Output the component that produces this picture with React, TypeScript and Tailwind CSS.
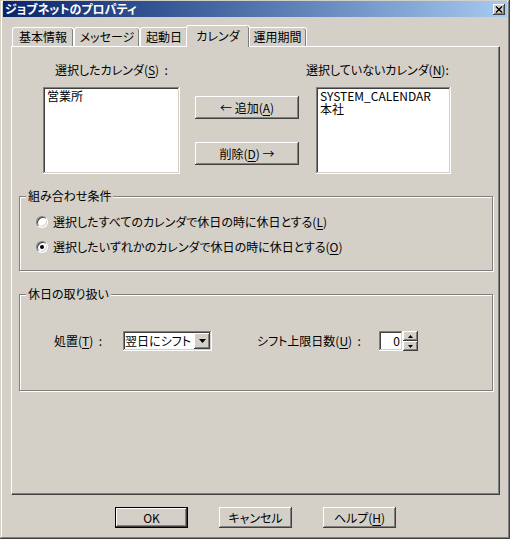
import React from "react";

const RAISED =
  "bg-[#d4d0c8] shadow-[inset_-1px_-1px_0_#404040,inset_1px_1px_0_#ffffff,inset_-2px_-2px_0_#808080,inset_2px_2px_0_#d4d0c8]";
const SUNKEN =
  "bg-white shadow-[inset_-1px_-1px_0_#ffffff,inset_1px_1px_0_#808080,inset_-2px_-2px_0_#d4d0c8,inset_2px_2px_0_#404040]";
const ETCHED =
  "border border-[#808080] shadow-[inset_1px_1px_0_#ffffff,1px_1px_0_#ffffff]";

function U({ children }: { children: React.ReactNode }) {
  return <span className="underline underline-offset-[2px]">{children}</span>;
}

function Radio({ checked, children }: { checked?: boolean; children: React.ReactNode }) {
  return (
    <div className="flex items-center h-[14px]">
      <div className="w-[12px] h-[12px] rounded-full bg-white border border-t-[#808080] border-l-[#808080] border-r-white border-b-white shadow-[inset_1px_1px_0_#404040,inset_-1px_-1px_0_#d4d0c8] flex items-center justify-center">
        {checked && <div className="w-[4px] h-[4px] rounded-full bg-black" />}
      </div>
      <span className="ml-[5px] whitespace-nowrap">{children}</span>
    </div>
  );
}

function Tab({ label, selected, w }: { label: string; selected?: boolean; w: string }) {
  return (
    <div
      className={
        selected
          ? `relative z-10 h-[22px] -mb-[1px] -mx-[2px] bg-[#d4d0c8] border-t border-l border-white border-r border-[#404040] rounded-t-[3px] shadow-[inset_-1px_0_0_#808080] flex items-start justify-center pt-[3px] whitespace-nowrap ${w}`
          : `h-[19px] bg-[#d4d0c8] border-t border-l border-white border-r border-[#404040] rounded-t-[3px] shadow-[inset_-1px_0_0_#808080] flex items-start justify-center pt-[2px] whitespace-nowrap ${w}`
      }
    >
      {label}
    </div>
  );
}

export default function App() {
  return (
    <div className="w-[510px] h-[539px] bg-[#d4d0c8] text-[12px] leading-[14px] text-black font-['Noto_Sans_CJK_JP','Liberation_Sans',sans-serif] [font-feature-settings:'palt'] shadow-[inset_-1px_-1px_0_#404040,inset_1px_1px_0_#d4d0c8,inset_-2px_-2px_0_#808080,inset_2px_2px_0_#ffffff] pt-[1px] px-[3px] flex flex-col overflow-hidden">
      {/* Title bar */}
      <div className="h-[16px] bg-linear-to-r from-[#0a246a] to-[#a6caf0] flex items-center pl-[2px] pr-[2px]">
        <span className="text-white font-bold text-[12px] leading-[14px] whitespace-nowrap">
          ジョブネットのプロパティ
        </span>
        <div className={`ml-auto w-[12px] h-[11px] ${RAISED} flex items-center justify-center`}>
          <svg width="8" height="7" viewBox="0 0 8 7">
            <path d="M1 0.5 L7 6.5 M7 0.5 L1 6.5" stroke="#000" strokeWidth="1.4" />
          </svg>
        </div>
      </div>

      {/* Tabs */}
      <div className="mt-[8px] h-[21px] flex items-end ml-[9px]">
        <Tab label="基本情報" w="w-[62px]" />
        <Tab label="メッセージ" w="w-[66px]" />
        <Tab label="起動日" w="w-[48px]" />
        <Tab label="カレンダ" w="w-[64px]" selected />
        <Tab label="運用期間" w="w-[59px]" />
      </div>

      {/* Panel */}
      <div className="ml-[8px] w-[489px] h-[449px] border-t border-l border-white border-r border-b border-r-[#404040] border-b-[#404040] shadow-[inset_-1px_-1px_0_#808080] flex flex-col">
        {/* Top section */}
        <div className="ml-[31px] mt-[16px] flex items-start">
          <div className="w-[137px] flex flex-col">
            <div className="pl-[12px] h-[14px] whitespace-nowrap">
              選択したカレンダ(<U>S</U>)&nbsp;&nbsp;:
            </div>
            <div className={`mt-[10px] h-[87px] ${SUNKEN} pl-[4px] pt-[2px] leading-[13px]`}>営業所</div>
          </div>
          <div className="ml-[15px] w-[104px] pt-[33px] flex flex-col gap-[23px]">
            <div className={`h-[23px] ${RAISED} flex items-center justify-center whitespace-nowrap`}>
              ← 追加(<U>A</U>)
            </div>
            <div className={`h-[23px] ${RAISED} flex items-center justify-center whitespace-nowrap`}>
              削除(<U>D</U>) →
            </div>
          </div>
          <div className="ml-[17px] w-[135px] flex flex-col">
            <div className="-ml-[10px] h-[14px] whitespace-nowrap">
              選択していないカレンダ(<U>N</U>):
            </div>
            <div className={`mt-[10px] h-[87px] ${SUNKEN} pl-[4px] pt-[2px] flex flex-col leading-[13px]`}>
              <div className="h-[13px]">SYSTEM_CALENDAR</div>
              <div className="h-[13px]">本社</div>
            </div>
          </div>
        </div>

        {/* Group 1 */}
        <div className={`relative ml-[7px] mt-[22px] w-[474px] h-[75px] ${ETCHED}`}>
          <span className="absolute left-[6px] -top-[8px] px-[2px] bg-[#d4d0c8] whitespace-nowrap">
            組み合わせ条件
          </span>
          <div className="pl-[16px] pt-[18px] flex flex-col gap-[11px]">
            <Radio>
              選択したすべてのカレンダで休日の時に休日とする(<U>L</U>)
            </Radio>
            <Radio checked>
              選択したいずれかのカレンダで休日の時に休日とする(<U>O</U>)
            </Radio>
          </div>
        </div>

        {/* Group 2 */}
        <div className={`relative ml-[7px] mt-[23px] w-[474px] h-[97px] ${ETCHED}`}>
          <span className="absolute left-[6px] -top-[8px] px-[2px] bg-[#d4d0c8] whitespace-nowrap">
            休日の取り扱い
          </span>
          <div className="pl-[34px] pt-[36px] flex items-center">
            <div className="w-[69px] whitespace-nowrap">
              処置(<U>T</U>)&nbsp;&nbsp;:
            </div>
            <div className={`w-[89px] h-[20px] ${SUNKEN} flex items-center pl-[2px] pr-[2px]`}>
              <span className="flex-1 whitespace-nowrap">翌日にシフト</span>
              <div className={`w-[16px] h-[16px] ${RAISED} flex items-center justify-center`}>
                <svg width="7" height="4" viewBox="0 0 7 4">
                  <path d="M0 0 H7 L3.5 4 Z" fill="#000" />
                </svg>
              </div>
            </div>
            <div className="ml-[45px] w-[122px] whitespace-nowrap">
              シフト上限日数(<U>U</U>)&nbsp;&nbsp;:
            </div>
            <div className={`w-[24px] h-[20px] ${SUNKEN} flex items-center justify-end pr-[3px]`}>0</div>
            <div className="w-[15px] h-[20px] flex flex-col">
              <div className={`h-[10px] ${RAISED} flex items-center justify-center`}>
                <svg width="5" height="3" viewBox="0 0 5 3">
                  <path d="M0 3 H5 L2.5 0 Z" fill="#000" />
                </svg>
              </div>
              <div className={`h-[10px] ${RAISED} flex items-center justify-center`}>
                <svg width="5" height="3" viewBox="0 0 5 3">
                  <path d="M0 0 H5 L2.5 3 Z" fill="#000" />
                </svg>
              </div>
            </div>
          </div>
        </div>
      </div>

      {/* Bottom buttons */}
      <div className="mt-[12px] ml-[112px] flex gap-[31px]">
        <div className="w-[73px] h-[21px] border border-black">
          <div className={`w-full h-full ${RAISED} flex items-center justify-center`}>OK</div>
        </div>
        <div className={`w-[73px] h-[21px] ${RAISED} flex items-center justify-center whitespace-nowrap`}>
          キャンセル
        </div>
        <div className={`w-[73px] h-[21px] ${RAISED} flex items-center justify-center whitespace-nowrap`}>
          ヘルプ(<U>H</U>)
        </div>
      </div>
    </div>
  );
}
